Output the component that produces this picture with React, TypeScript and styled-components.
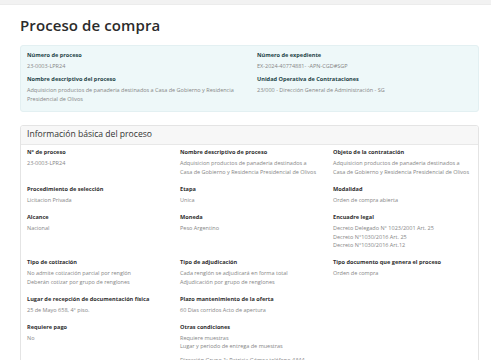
import React from 'react';
import styled, { createGlobalStyle } from 'styled-components';

const GlobalStyle = createGlobalStyle`
  html, body {
    margin: 0;
    padding: 0;
    background: #ffffff;
    font-family: "Open Sans", "Liberation Sans", sans-serif;
  }
`;

const TopStrip = styled.div`
  height: 4px;
  background: #f2f2f2;
  border-bottom: 1px solid #ececec;
`;

const Page = styled.div`
  padding: 10px 12px 0 20px;
`;

const Title = styled.h1`
  margin: 0 0 10px;
  font-size: 15px;
  line-height: 20px;
  font-weight: 600;
  color: #2b2b2b;
  letter-spacing: 0.1px;
`;

const Summary = styled.div`
  display: grid;
  grid-template-columns: 230px 1fr;
  background: #eef8f9;
  border: 1px solid #e3f0f2;
  border-radius: 3px;
  padding: 5px 6px 8px;
`;

const SummaryCol = styled.div`
  display: flex;
  flex-direction: column;
  gap: 4px;
`;

const Card = styled.div`
  margin-top: 13px;
  border: 1px solid #e4e4e4;
  border-radius: 3px;
  overflow: hidden;
`;

const CardHeader = styled.div`
  background: #f7f7f7;
  border-bottom: 1px solid #e8e8e8;
  padding: 2px 6px 3px;
  font-size: 8.6px;
  line-height: 13px;
  color: #333;
`;

const Grid = styled.div`
  display: grid;
  grid-template-columns: 153px 153px 1fr;
  row-gap: 8px;
  padding: 3px 6px 10px;
`;

const Field = styled.div`
  display: flex;
  flex-direction: column;
`;

const Label = styled.div<{ $tone?: 'teal' | 'dark' }>`
  font-size: 5.6px;
  line-height: 9px;
  font-weight: 700;
  margin-bottom: 2px;
  color: ${(p) => (p.$tone === 'teal' ? '#1e4448' : '#2f2f2f')};
`;

const Value = styled.div`
  font-size: 5.5px;
  line-height: 8.8px;
  color: #868686;
  white-space: pre-line;
`;

const Spacer = styled.div`
  height: 5px;
`;

type Item = { label: string; value: string };

const rows: Item[][] = [
  [
    { label: 'N° de proceso', value: '23-0003-LPR24' },
    {
      label: 'Nombre descriptivo de proceso',
      value: 'Adquisicion productos de panaderia destinados a\nCasa de Gobierno y Residencia Presidencial de Olivos',
    },
    {
      label: 'Objeto de la contratación',
      value: 'Adquisicion productos de panaderia destinados a\nCasa de Gobierno y Residencia Presidencial de Olivos',
    },
  ],
  [
    { label: 'Procedimiento de selección', value: 'Licitacion Privada' },
    { label: 'Etapa', value: 'Unica' },
    { label: 'Modalidad', value: 'Orden de compra abierta' },
  ],
  [
    { label: 'Alcance', value: 'Nacional' },
    { label: 'Moneda', value: 'Peso Argentino' },
    {
      label: 'Encuadre legal',
      value: 'Decreto Delegado N° 1023/2001 Art. 25\nDecreto N°1030/2016 Art. 25\nDecreto N°1030/2016 Art.12',
    },
  ],
  [
    {
      label: 'Tipo de cotización',
      value: 'No admite cotización parcial por renglón\nDeberán cotizar por grupo de renglones',
    },
    {
      label: 'Tipo de adjudicación',
      value: 'Cada renglón se adjudicará en forma total\nAdjudicación por grupo de renglones',
    },
    { label: 'Tipo documento que genera el proceso', value: 'Orden de compra' },
  ],
  [
    { label: 'Lugar de recepción de documentación física', value: '25 de Mayo 658, 4° piso.' },
    { label: 'Plazo mantenimiento de la oferta', value: '60 Dias corridos Acto de apertura' },
    { label: '', value: '' },
  ],
  [
    { label: 'Requiere pago', value: 'No' },
    {
      label: 'Otras condiciones',
      value: 'Requiere muestras\nLugar y periodo de entrega de muestras',
    },
    { label: '', value: '' },
  ],
];

export default function App() {
  return (
    <>
      <GlobalStyle />
      <TopStrip />
      <Page>
        <Title>Proceso de compra</Title>
        <Summary>
          <SummaryCol>
            <Field>
              <Label $tone="teal">Número de proceso</Label>
              <Value>23-0003-LPR24</Value>
            </Field>
            <Field>
              <Label $tone="teal">Nombre descriptivo del proceso</Label>
              <Value>
                {'Adquisicion productos de panaderia destinados a Casa de Gobierno y Residencia\nPresidencial de Olivos'}
              </Value>
            </Field>
          </SummaryCol>
          <SummaryCol>
            <Field>
              <Label $tone="teal">Número de expediente</Label>
              <Value>EX-2024-40774881- -APN-CGD#SGP</Value>
            </Field>
            <Field>
              <Label $tone="teal">Unidad Operativa de Contrataciones</Label>
              <Value>23/000 - Dirección General de Administración - SG</Value>
            </Field>
          </SummaryCol>
        </Summary>

        <Card>
          <CardHeader>Información básica del proceso</CardHeader>
          <Grid>
            {rows.map((row, r) =>
              row.map((item, c) => (
                <Field key={`${r}-${c}`}>
                  {item.label && <Label $tone="dark">{item.label}</Label>}
                  {item.value && <Value>{item.value}</Value>}
                  {r === 5 && c === 1 && (
                    <>
                      <Spacer />
                      <Value>Dirección Grupo 1: Patricia Gómez teléfono 4344</Value>
                    </>
                  )}
                </Field>
              )),
            )}
          </Grid>
        </Card>
      </Page>
    </>
  );
}
